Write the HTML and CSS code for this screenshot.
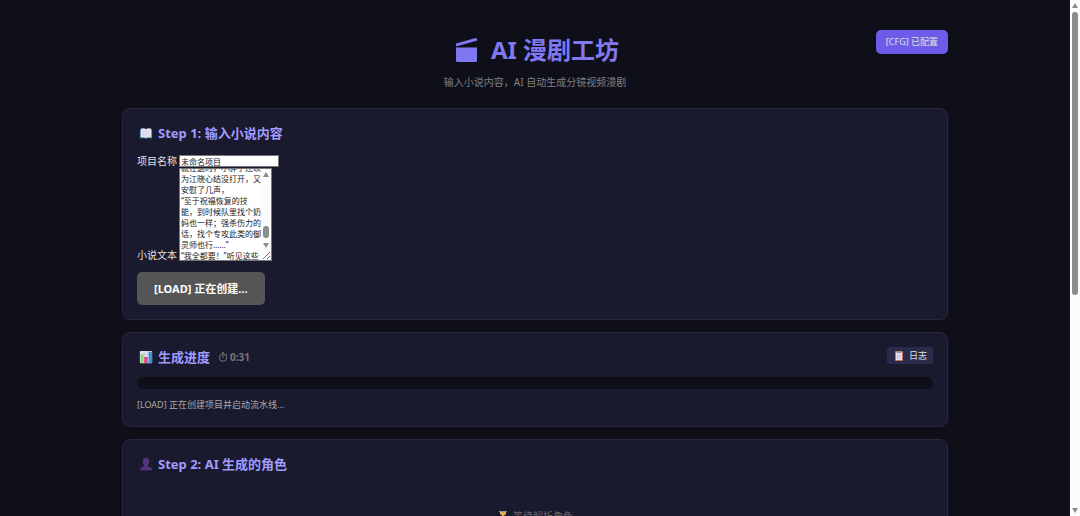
FILE: index.html
```html
<!DOCTYPE html>
<html lang="zh-CN">
<head>
  <meta charset="UTF-8" />
  <title>AI 漫剧工坊</title>
  <meta name="viewport" content="width=device-width, initial-scale=1.0" />
  <link rel="stylesheet" href="styles.css">
</head>
<body>
  <div class="page">
    <div class="container">
      <header class="header">
        <h1>
          <svg class="logo" viewBox="-4 0 28 26" aria-hidden="true">
            <path d="M1 6.5 20.5 1q1-.2 1.300.8l.5 1.700L2 9.200Q1 9.400.9 8.500Z" />
            <path d="M1 10.500h21v13q0 1.500-1.500 1.500h-18Q1 25 1 23.500Z" />
          </svg>
          <span>AI 漫剧工坊</span>
        </h1>
        <p>输入小说内容，AI 自动生成分镜视频漫剧</p>
        <button class="config-btn" type="button">[CFG] 已配置</button>
      </header>

      <section class="card">
        <h2>
          <svg class="icon" viewBox="0 0 16 16" aria-hidden="true">
            <path fill="#3f7fae" d="M1 4h14v10H9l-1 1-1-1H1z" />
            <path fill="#e9e4f5" d="M2 3q3.500-1 6 .5Q10.500 2 14 3v10q-3.500-.8-6 .7Q5.500 12.200 2 13z" />
            <path stroke="#c9c3da" fill="none" d="M8 4v9.500M3.500 6h3M3.500 8h3M3.500 10h3M9.500 6h3M9.500 8h3M9.500 10h3" stroke-width=".6" />
          </svg>
          <span>Step 1: 输入小说内容</span>
        </h2>
        <div class="field">
          <label for="projectName">项目名称</label>
          <input id="projectName" type="text" value="未命名项目">
        </div>
        <div class="field">
          <label for="novelText">小说文本</label>
          <div class="textarea-wrap">
            <textarea id="novelText">就在这时，小胖子还以为江晓心结没打开，又安慰了几声，
“至于祝福恢复的技能，到时候队里找个奶妈也一样；强杀伤力的话，找个专攻此类的御灵师也行……”
“我全都要！”听见这些话，江晓认真地说道。</textarea>
            <div class="scrollbar inner" aria-hidden="true">
              <i class="arrow up"></i>
              <div class="track"><i class="thumb"></i></div>
              <i class="arrow down"></i>
              <svg class="grip" viewBox="0 0 10 10"><path d="M2 9 9 2M6 9l3-3" /></svg>
            </div>
          </div>
        </div>
        <button class="create-btn" type="button">[LOAD] 正在创建...</button>
      </section>

      <section class="card">
        <div class="card-head">
          <h2>
            <svg class="icon" viewBox="0 0 16 16" aria-hidden="true">
              <rect x="1" y="1" width="14" height="14" rx="1" fill="#e4e2ec" />
              <path stroke="#bbb8cc" stroke-width=".5" d="M1 5h14M1 9h14M6 1v14M10 1v14" />
              <rect x="2" y="5" width="3" height="10" fill="#86d76b" />
              <rect x="6" y="8" width="4" height="7" fill="#e5407f" />
              <rect x="11" y="2" width="4" height="13" fill="#398fe0" />
            </svg>
            <span>生成进度</span>
            <span class="timer">
              <svg viewBox="0 0 10 10" aria-hidden="true"><circle cx="5" cy="5.700" r="3.600" /><path d="M5 6V3.500M3.700.8h2.600M5 .8V2M8 2l1 1" /></svg>
              0:31
            </span>
          </h2>
          <button class="log-btn" type="button">
            <svg viewBox="0 0 10 12" aria-hidden="true">
              <rect x="1" y="1" width="8" height="10" rx="1" fill="#b9785f" />
              <path fill="#eadff0" d="M2 2.500h6V10H2z" />
              <path fill="#8e91a7" d="M3 1h4v2H3z" />
              <path stroke="#b9a7c9" stroke-width=".5" d="M3 5h4M3 6.500h4M3 8h4" />
            </svg>
            日志
          </button>
        </div>
        <div class="progress"></div>
        <p class="status">[LOAD] 正在创建项目并启动流水线...</p>
      </section>

      <section class="card">
        <h2>
          <svg class="icon" viewBox="0 0 16 16" aria-hidden="true">
            <path fill="#55347f" d="M8 1q3.800 0 3.800 4Q11.800 8 10 9.500v1.200l3.500 1.300q1.500.8 1.500 3H1q0-2.200 1.500-3L6 10.700V9.500Q4.200 8 4.200 5 4.200 1 8 1z" />
          </svg>
          <span>Step 2: AI 生成的角色</span>
        </h2>
        <div class="empty">
          <svg viewBox="0 0 10 12" aria-hidden="true">
            <path fill="#e8b04c" d="M2 2h6v2L5.500 6 8 8v2H2V8l2.500-2L2 4z" />
            <path fill="#9a9385" d="M1 1h8v1.200H1zM1 10h8v1.200H1z" />
          </svg>
          等待解析角色
        </div>
      </section>
    </div>
  </div>
  <div class="scrollbar outer" aria-hidden="true">
    <i class="arrow up"></i>
    <div class="track"><i class="thumb"></i></div>
    <i class="arrow down"></i>
  </div>

  <script>
    const novel = document.getElementById('novelText');
    novel.scrollTop = 7;
  </script>
</body>
</html>
```
FILE: styles.css
```css
* {
  box-sizing: border-box;
  margin: 0;
  padding: 0;
}

body {
  display: flex;
  height: 100vh;
  overflow: hidden;
  background-color: #0f0f1a;
  color: #e0e0e0;
  font-family: "Noto Sans", "Noto Sans CJK SC", sans-serif;
  font-size: 10px;
}

button,
input,
textarea {
  font-family: inherit;
}

.page {
  flex: 1;
  overflow: hidden;
  padding: 0 16px;
}

.container {
  position: relative;
  max-width: 826px;
  margin: 0 auto;
}

.header {
  padding: 32px 0 18px;
  text-align: center;
}

.header h1 {
  display: flex;
  align-items: center;
  justify-content: center;
  gap: 12px;
  color: #8078f0;
  font-size: 24px;
  line-height: 36px;
}

.logo {
  width: 28px;
  height: 26px;
  fill: currentColor;
}

.header p {
  margin-top: 6px;
  color: #808080;
  line-height: 16px;
}

.config-btn {
  position: absolute;
  top: 30px;
  right: 0;
  padding: 0 10px;
  border: none;
  border-radius: 5px;
  background-color: #6c5ce7;
  color: #e0e0e0;
  font-size: 9px;
  line-height: 24px;
}

.card {
  margin-bottom: 12px;
  padding: 14px;
  border: 1px solid #2a2540;
  border-radius: 8px;
  background-color: #1a1a2e;
}

h2 {
  display: flex;
  align-items: center;
  gap: 4px;
  padding-left: 1px;
  color: #a29bfe;
  font-size: 13px;
  line-height: 20px;
}

.icon {
  width: 16px;
  height: 14px;
}

.card > h2 {
  margin-bottom: 12px;
}

.field {
  display: flex;
  align-items: flex-end;
  gap: 2px;
  line-height: 12px;
}

.field + .field {
  margin-top: 1px;
}

.field input {
  width: 100px;
  height: 12px;
  padding: 0 1px;
  border: 1px solid #777;
  background-color: #fff;
  color: #222;
  font-size: 8px;
}

.textarea-wrap {
  position: relative;
  width: 93px;
  height: 93px;
}

.field textarea {
  display: block;
  width: 100%;
  height: 100%;
  padding: 0 10px 0 1px;
  border: 1px solid #777;
  background-color: #fff;
  color: #222;
  font-size: 8px;
  line-height: 11px;
  resize: none;
  overflow: hidden;
}

.create-btn {
  margin-top: 11px;
  padding: 0 17px;
  border: none;
  border-radius: 5px;
  background-color: #555;
  color: #fff;
  font-size: 11px;
  font-weight: 700;
  line-height: 33px;
}

.card-head {
  display: flex;
  align-items: flex-start;
  justify-content: space-between;
  margin-bottom: 10px;
}

.timer {
  display: flex;
  align-items: center;
  gap: 2px;
  margin-left: 4px;
  color: #777;
  font-size: 10px;
}

.timer svg {
  width: 10px;
  height: 10px;
  fill: none;
  stroke: currentColor;
}

.log-btn {
  display: flex;
  align-items: center;
  gap: 4px;
  padding: 0 6px;
  border: none;
  border-radius: 3px;
  background-color: #2a2a4a;
  color: #e0e0e0;
  font-size: 9px;
  line-height: 17px;
}

.log-btn svg,
.empty svg {
  width: 12px;
  height: 12px;
}

.progress {
  height: 12px;
  border-radius: 6px;
  background-color: #0f0f1a;
}

.status {
  margin-top: 8px;
  color: #aaa;
  font-size: 9px;
  line-height: 15px;
}

.empty {
  display: flex;
  align-items: center;
  justify-content: center;
  gap: 4px;
  padding: 22px 0;
  color: #666;
  line-height: 16px;
}

/* scrollbars */
.scrollbar {
  display: flex;
  flex-direction: column;
  align-items: center;
  width: 10px;
  background-color: #fcfcfc;
}

.track {
  flex: 1;
}

.thumb {
  display: block;
  width: 6px;
  border-radius: 3px;
  background-color: #8b8b8b;
}

.arrow {
  border: 3px solid transparent;
}

.arrow.up {
  border-top: none;
  border-bottom: 5px solid #8b8b8b;
}

.arrow.down {
  border-bottom: none;
  border-top: 5px solid #8b8b8b;
}

.outer {
  padding: 3px 0;
}

.outer .track {
  display: flex;
  flex-direction: column;
  padding-top: 4px;
}

.outer .thumb {
  height: 57%;
}

.inner {
  position: absolute;
  top: 1px;
  right: 1px;
  bottom: 1px;
  padding-top: 3px;
}

.inner .track {
  display: flex;
  flex-direction: column;
  justify-content: flex-end;
  padding-bottom: 5px;
}

.inner .thumb {
  height: 12px;
}

.grip {
  width: 10px;
  height: 10px;
  margin-top: 2px;
  stroke: #777;
}
```
